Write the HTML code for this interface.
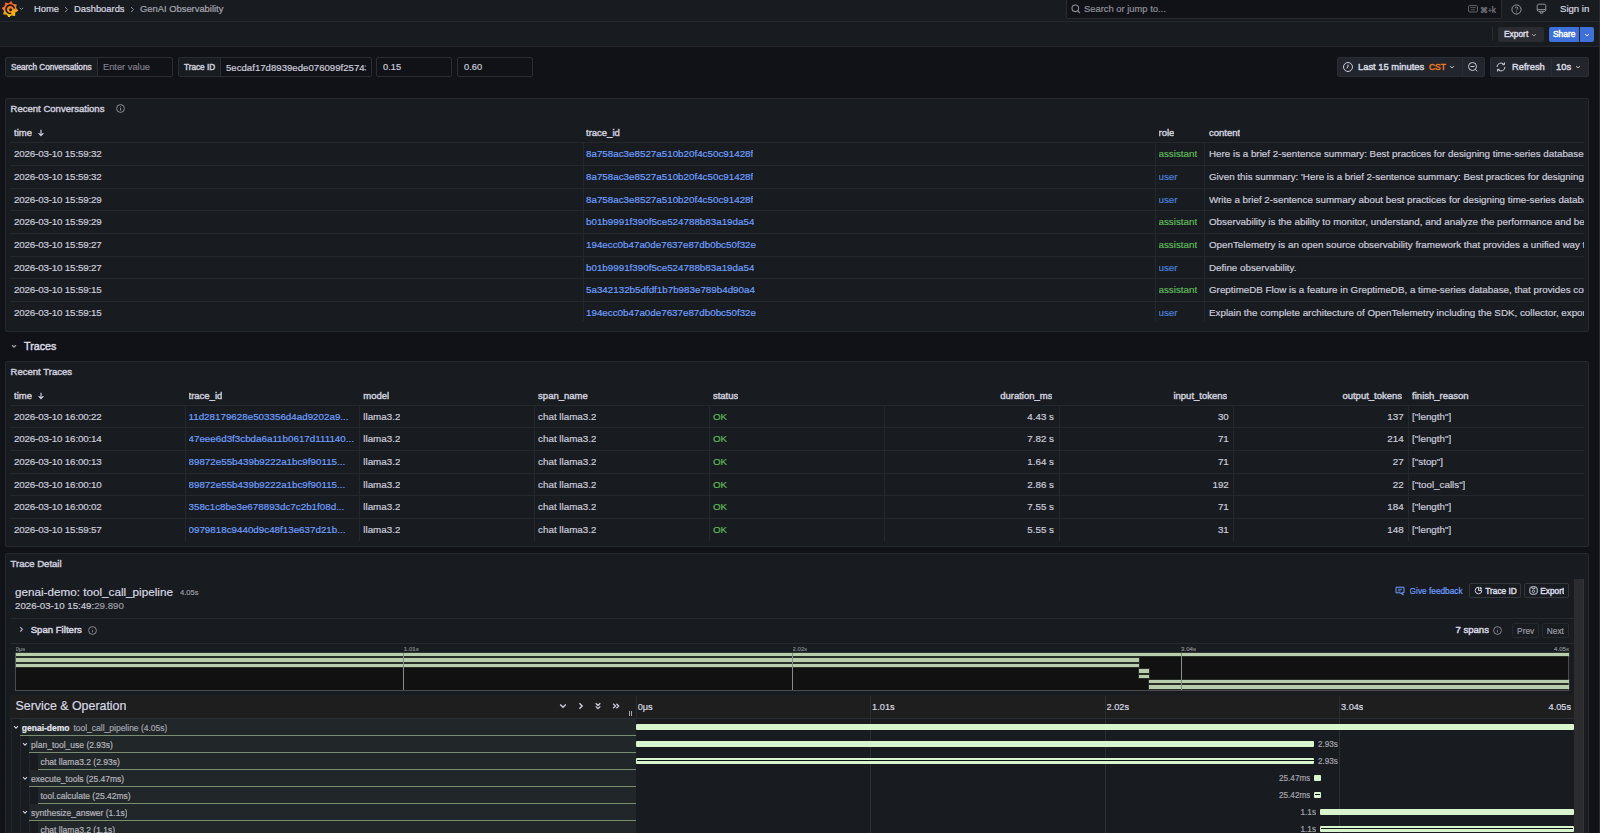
<!DOCTYPE html>
<html><head><meta charset="utf-8">
<style>
*{box-sizing:border-box;margin:0;padding:0}
html,body{width:1600px;height:833px;overflow:hidden;background:#111217;font-family:"Liberation Sans",sans-serif;color:#ccccdc;font-size:9.8px}
.cell,.t,.ptitle{-webkit-text-stroke:0.2px currentColor}
.med{font-weight:normal!important;-webkit-text-stroke:0.45px currentColor!important}
.a{position:absolute}
.t{position:absolute;white-space:nowrap;line-height:12px}
#top{left:0;top:0;width:1600px;height:22px;background:#181b1f;border-bottom:1px solid #25272c}
#tool{left:0;top:22px;width:1600px;height:25px;background:#181b1f;border-bottom:1px solid #25272c}
.panel{position:absolute;left:5px;width:1584px;background:#181b1f;border:1px solid #25282d;border-radius:2px;overflow:hidden}
.ptitle{position:absolute;left:5px;font-weight:normal;-webkit-text-stroke:0.45px currentColor!important;font-size:9.55px;color:#ccccdc;white-space:nowrap}
.tbl{position:absolute;left:5px;width:1573px}
.hr{position:absolute;left:0;width:1573px;height:1px;background:#24272c}
.vr{position:absolute;width:1px;background:#24272c}
.cell{position:absolute;white-space:nowrap;overflow:hidden;line-height:12px}
.hd{font-weight:normal;font-size:9.5px;-webkit-text-stroke:0.45px currentColor!important}
.lnk{color:#6e9fff}
.grn{color:#5fb85a}
.blu{color:#4a80de}
.r{text-align:right}
.var{position:absolute;top:57px;height:20px;border:1px solid #2a2d33;border-radius:2px;background:#111217}
.vlab{position:absolute;top:0;left:0;height:18px;background:#181b1f;border-right:1px solid #2a2d33;font-weight:normal;-webkit-text-stroke:0.45px currentColor;font-size:8.2px;line-height:19.4px;padding-left:5px;white-space:nowrap}
.vval{position:absolute;top:0;height:18px;line-height:19px;font-size:9.3px;-webkit-text-stroke:0.2px currentColor;white-space:nowrap;overflow:hidden}
</style></head><body>
<!-- TOP BAR -->
<div id="top" class="a">
  <svg class="a" style="left:1.5px;top:1px" width="16" height="16" viewBox="0 0 16 16">
    <defs><linearGradient id="lg" x1="0" y1="0" x2="0.2" y2="1"><stop offset="0" stop-color="#f4502a"/><stop offset="0.45" stop-color="#f57a22"/><stop offset="1" stop-color="#fcc512"/></linearGradient></defs>
    <path fill="url(#lg)" stroke="url(#lg)" stroke-width="1.1" stroke-linejoin="round" d="M9.15 0.69 L10.35 2.89 L11.69 3.70 L14.20 3.73 L13.49 6.13 L13.86 7.66 L15.61 9.45 L13.41 10.65 L12.60 11.99 L12.57 14.50 L10.17 13.79 L8.64 14.16 L6.85 15.91 L5.65 13.71 L4.31 12.90 L1.80 12.87 L2.51 10.47 L2.14 8.94 L0.39 7.15 L2.59 5.95 L3.40 4.61 L3.43 2.10 L5.83 2.81 L7.36 2.44Z"/>
    <path fill="none" stroke="#181b1f" stroke-width="1.7" d="M12.4 7.6 A4.2 4.2 0 1 0 9.2 12.4"/>
        <circle cx="8.6" cy="8.8" r="1.5" fill="#181b1f"/>
  </svg>
  <svg class="a" style="left:18.8px;top:7px" width="5" height="4" viewBox="0 0 5 4"><path d="M0.8 0.8l1.7 1.7 1.7-1.7" fill="none" stroke="#8e8f98" stroke-width="1"/></svg>
  <div class="t" style="left:34px;top:3px;font-size:9.4px;color:#d8d9e2">Home</div>
  <svg class="a" style="left:64px;top:6px" width="5" height="7" viewBox="0 0 5 7"><path d="M1 1l2.5 2.5L1 6" fill="none" stroke="#8e8f98" stroke-width="1"/></svg>
  <div class="t" style="left:74px;top:3px;font-size:9.4px;color:#d8d9e2">Dashboards</div>
  <svg class="a" style="left:130px;top:6px" width="5" height="7" viewBox="0 0 5 7"><path d="M1 1l2.5 2.5L1 6" fill="none" stroke="#8e8f98" stroke-width="1"/></svg>
  <div class="t" style="left:140px;top:3px;font-size:9.4px;color:#a6a7b0">GenAI Observability</div>
  <!-- search -->
  <div class="a" style="left:1066px;top:-3px;width:436px;height:22px;background:#111217;border:1px solid #2a2c31;border-radius:2px"></div>
  <svg class="a" style="left:1071px;top:4px" width="10" height="10" viewBox="0 0 10 10"><circle cx="4.3" cy="4.3" r="3.3" fill="none" stroke="#8e8f98" stroke-width="1.1"/><path d="M6.8 6.8L9 9" stroke="#8e8f98" stroke-width="1.1"/></svg>
  <div class="t" style="left:1084px;top:3px;font-size:9.4px;color:#8e8f98">Search or jump to...</div>
  <svg class="a" style="left:1468px;top:5px" width="10" height="8" viewBox="0 0 10 8"><rect x="0.6" y="0.6" width="8.8" height="6.4" rx="1" fill="none" stroke="#6e6f78" stroke-width="0.9"/><path d="M2.2 2.6h5.6M3 4.8h4" stroke="#6e6f78" stroke-width="0.7"/></svg>
  <div class="t" style="left:1480px;top:3.5px;font-size:8.4px;color:#7e7f88">⌘<span style="font-size:6.5px">+</span>k</div>
  <svg class="a" style="left:1511px;top:4px" width="11" height="11" viewBox="0 0 11 11"><circle cx="5.5" cy="5.5" r="4.6" fill="none" stroke="#9b9ca5" stroke-width="1"/><path d="M4.2 4.3a1.3 1.3 0 1 1 1.8 1.2c-.4.2-.5.5-.5.9" fill="none" stroke="#9b9ca5" stroke-width="0.9"/><circle cx="5.5" cy="8" r="0.5" fill="#9b9ca5"/></svg>
  <svg class="a" style="left:1536px;top:3px" width="11" height="12" viewBox="0 0 11 12"><rect x="1.2" y="1.2" width="8.6" height="7.2" rx="1.6" fill="none" stroke="#9b9ca5" stroke-width="0.9"/><path d="M1.3 6.6h8.4M4.2 8.6v1.6h2.6V8.6" fill="none" stroke="#9b9ca5" stroke-width="0.9"/></svg>
  <div class="t" style="left:1560px;top:3px;font-size:9.6px;color:#d8d9e2">Sign in</div>
</div>
<!-- TOOLBAR -->
<div id="tool" class="a">
  <div class="a" style="left:1492px;top:5px;width:1px;height:14px;background:#2a2c31"></div>
  <div class="a" style="left:1498px;top:5px;width:46px;height:15px;background:#2a2c31;border-radius:2px"></div>
  <div class="t med" style="left:1504px;top:6px;font-size:8.4px;line-height:12px;color:#d8d9e2">Export</div>
  <svg class="a" style="left:1531px;top:11px" width="6" height="4" viewBox="0 0 6 4"><path d="M1 1l2 2 2-2" fill="none" stroke="#aaa" stroke-width="0.9"/></svg>
  <div class="a" style="left:1549px;top:5px;width:30px;height:15px;background:#3d71d9;border-radius:2px 0 0 2px"></div>
  <div class="a" style="left:1580px;top:5px;width:14px;height:15px;background:#3d71d9;border-radius:0 2px 2px 0"></div>
  <div class="t med" style="left:1553px;top:6px;font-size:8.4px;color:#fff">Share</div>
  <svg class="a" style="left:1584px;top:11px" width="6" height="4" viewBox="0 0 6 4"><path d="M1 1l2 2 2-2" fill="none" stroke="#fff" stroke-width="0.9"/></svg>
</div>
<!-- VARIABLES -->
<div class="var" style="left:5px;width:168px"><div class="vlab" style="width:92px">Search Conversations</div><div class="vval" style="left:97px;width:70px;color:#7e7f88">Enter value</div></div>
<div class="var" style="left:178px;width:194px"><div class="vlab" style="width:42px">Trace ID</div><div class="vval" style="left:47px;width:140px;font-size:9.65px;color:#ccccdc">5ecdaf17d8939ede076099f25743</div></div>
<div class="var" style="left:376px;width:76px"><div class="vval" style="left:6px;width:60px;color:#ccccdc">0.15</div></div>
<div class="var" style="left:457px;width:76px"><div class="vval" style="left:6px;width:60px;color:#ccccdc">0.60</div></div>
<!-- time picker -->
<div class="a" style="left:1337px;top:57px;width:148px;height:20px;background:#22252b;border:1px solid #2a2d33;border-radius:2px"></div>
<div class="a" style="left:1462px;top:58px;width:1px;height:18px;background:#2a2d33"></div>
<svg class="a" style="left:1342px;top:61px" width="12" height="12" viewBox="0 0 12 12"><circle cx="6" cy="6" r="4.5" fill="none" stroke="#ccccdc" stroke-width="1"/><path d="M6 3.5V6l-1.5 1.3" fill="none" stroke="#ccccdc" stroke-width="1"/></svg>
<div class="t med" style="left:1358px;top:61px;font-size:9.4px;color:#d8d9e2">Last 15 minutes</div>
<div class="t med" style="left:1429px;top:61px;font-size:8.4px;color:#f07b22">CST</div>
<svg class="a" style="left:1449px;top:65px" width="6" height="4" viewBox="0 0 6 4"><path d="M1 1l2 2 2-2" fill="none" stroke="#ccc" stroke-width="0.9"/></svg>
<svg class="a" style="left:1467px;top:61px" width="12" height="12" viewBox="0 0 12 12"><circle cx="5.5" cy="5.5" r="4" fill="none" stroke="#ccccdc" stroke-width="1"/><path d="M3.5 5.5h4M8.3 8.3l2 2" fill="none" stroke="#ccccdc" stroke-width="1"/></svg>
<div class="a" style="left:1490px;top:57px;width:99px;height:20px;background:#22252b;border:1px solid #2a2d33;border-radius:2px"></div>
<div class="a" style="left:1551px;top:58px;width:1px;height:18px;background:#2a2d33"></div>
<svg class="a" style="left:1495px;top:61px" width="12" height="12" viewBox="0 0 12 12"><path d="M10 6a4 4 0 0 1-7 2.6M2 6a4 4 0 0 1 7-2.6" fill="none" stroke="#ccccdc" stroke-width="1"/><path d="M9.5 1.5v2.2H7.3M2.5 10.5V8.3h2.2" fill="none" stroke="#ccccdc" stroke-width="1"/></svg>
<div class="t med" style="left:1512px;top:61px;font-size:9.4px;color:#d8d9e2">Refresh</div>
<div class="t med" style="left:1556px;top:61px;font-size:9.4px;color:#d8d9e2">10s</div>
<svg class="a" style="left:1575px;top:65px" width="6" height="4" viewBox="0 0 6 4"><path d="M1 1l2 2 2-2" fill="none" stroke="#ccc" stroke-width="0.9"/></svg>

<!-- PANEL 1 -->
<div class="panel" style="top:98px;height:234px">
<div class="ptitle" style="left:4.5px;top:3.5px;line-height:12px">Recent Conversations</div>
<svg class="a" style="left:109.5px;top:5px" width="9" height="9" viewBox="0 0 9 9"><circle cx="4.5" cy="4.5" r="3.9" fill="none" stroke="#9a9ba4" stroke-width="0.9"/><path d="M4.5 4v2.6" stroke="#9a9ba4" stroke-width="0.9"/><circle cx="4.5" cy="2.7" r="0.5" fill="#9a9ba4"/></svg>
<div class="cell hd" style="left:8px;top:28.10px;">time</div>
<div class="cell hd" style="left:580px;top:28.10px;">trace_id</div>
<div class="cell hd" style="left:1152.5px;top:28.10px;">role</div>
<div class="cell hd" style="left:1203px;top:28.10px;">content</div>
<svg class="a" style="left:31px;top:29.5px" width="8" height="8" viewBox="0 0 8 8"><path d="M4 0.8v5.6M1.6 4.2L4 6.6l2.4-2.4" fill="none" stroke="#ccccdc" stroke-width="1.2"/></svg>
<div class="hr" style="left:4px;top:43px;width:1574px"></div>
<div class="cell " style="left:8px;top:49.30px;letter-spacing:-0.18px">2026-03-10 15:59:32</div>
<div class="cell lnk" style="left:580px;top:49.30px;">8a758ac3e8527a510b20f4c50c91428f</div>
<div class="cell grn" style="left:1152.5px;top:49.30px;">assistant</div>
<div class="cell " style="left:1203px;top:49.30px;width:374.5px">Here is a brief 2-sentence summary: Best practices for designing time-series database systems include</div>
<div class="hr" style="left:4px;top:66.00px;width:1574px"></div>
<div class="cell " style="left:8px;top:71.97px;letter-spacing:-0.18px">2026-03-10 15:59:32</div>
<div class="cell lnk" style="left:580px;top:71.97px;">8a758ac3e8527a510b20f4c50c91428f</div>
<div class="cell blu" style="left:1152.5px;top:71.97px;">user</div>
<div class="cell " style="left:1203px;top:71.97px;width:374.5px">Given this summary: 'Here is a brief 2-sentence summary: Best practices for designing time-series</div>
<div class="hr" style="left:4px;top:88.67px;width:1574px"></div>
<div class="cell " style="left:8px;top:94.64px;letter-spacing:-0.18px">2026-03-10 15:59:29</div>
<div class="cell lnk" style="left:580px;top:94.64px;">8a758ac3e8527a510b20f4c50c91428f</div>
<div class="cell blu" style="left:1152.5px;top:94.64px;">user</div>
<div class="cell " style="left:1203px;top:94.64px;width:374.5px">Write a brief 2-sentence summary about best practices for designing time-series databases</div>
<div class="hr" style="left:4px;top:111.34px;width:1574px"></div>
<div class="cell " style="left:8px;top:117.31px;letter-spacing:-0.18px">2026-03-10 15:59:29</div>
<div class="cell lnk" style="left:580px;top:117.31px;">b01b9991f390f5ce524788b83a19da54</div>
<div class="cell grn" style="left:1152.5px;top:117.31px;">assistant</div>
<div class="cell " style="left:1203px;top:117.31px;width:374.5px">Observability is the ability to monitor, understand, and analyze the performance and behavior</div>
<div class="hr" style="left:4px;top:134.01px;width:1574px"></div>
<div class="cell " style="left:8px;top:139.98px;letter-spacing:-0.18px">2026-03-10 15:59:27</div>
<div class="cell lnk" style="left:580px;top:139.98px;">194ecc0b47a0de7637e87db0bc50f32e</div>
<div class="cell grn" style="left:1152.5px;top:139.98px;">assistant</div>
<div class="cell " style="left:1203px;top:139.98px;width:374.5px">OpenTelemetry is an open source observability framework that provides a unified way to collect</div>
<div class="hr" style="left:4px;top:156.68px;width:1574px"></div>
<div class="cell " style="left:8px;top:162.65px;letter-spacing:-0.18px">2026-03-10 15:59:27</div>
<div class="cell lnk" style="left:580px;top:162.65px;">b01b9991f390f5ce524788b83a19da54</div>
<div class="cell blu" style="left:1152.5px;top:162.65px;">user</div>
<div class="cell " style="left:1203px;top:162.65px;width:374.5px">Define observability.</div>
<div class="hr" style="left:4px;top:179.35px;width:1574px"></div>
<div class="cell " style="left:8px;top:185.32px;letter-spacing:-0.18px">2026-03-10 15:59:15</div>
<div class="cell lnk" style="left:580px;top:185.32px;">5a342132b5dfdf1b7b983e789b4d90a4</div>
<div class="cell grn" style="left:1152.5px;top:185.32px;">assistant</div>
<div class="cell " style="left:1203px;top:185.32px;width:374.5px">GreptimeDB Flow is a feature in GreptimeDB, a time-series database, that provides continuous</div>
<div class="hr" style="left:4px;top:202.02px;width:1574px"></div>
<div class="cell " style="left:8px;top:207.99px;letter-spacing:-0.18px">2026-03-10 15:59:15</div>
<div class="cell lnk" style="left:580px;top:207.99px;">194ecc0b47a0de7637e87db0bc50f32e</div>
<div class="cell blu" style="left:1152.5px;top:207.99px;">user</div>
<div class="cell " style="left:1203px;top:207.99px;width:374.5px">Explain the complete architecture of OpenTelemetry including the SDK, collector, exporters</div>
<div class="vr" style="left:576.5px;top:43px;height:179px"></div>
<div class="vr" style="left:1148.5px;top:43px;height:179px"></div>
<div class="vr" style="left:1198px;top:43px;height:179px"></div>
</div>
<!-- ROW TRACES -->
<svg class="a" style="left:10.5px;top:344px" width="6" height="5" viewBox="0 0 6 5"><path d="M1 1.2l2 2 2-2" fill="none" stroke="#a8a9b2" stroke-width="1.2"/></svg>
<div class="t med" style="left:24px;top:340.3px;font-size:10.7px;color:#d8d9e2">Traces</div>
<!-- PANEL 2 -->
<div class="panel" style="top:361px;height:186px">
<div class="ptitle" style="left:4.5px;top:3.6999999999999886px;line-height:12px">Recent Traces</div>
<div class="cell hd" style="left:8px;top:28.30px;">time</div>
<div class="cell hd" style="left:182.5px;top:28.30px;">trace_id</div>
<div class="cell hd" style="left:357.3px;top:28.30px;">model</div>
<div class="cell hd" style="left:532.1px;top:28.30px;">span_name</div>
<div class="cell hd" style="left:706.9px;top:28.30px;">status</div>
<div class="cell hd r" style="left:877.7px;top:28.30px;width:168.8px">duration_ms</div>
<div class="cell hd r" style="left:1052.5px;top:28.30px;width:168.8px">input_tokens</div>
<div class="cell hd r" style="left:1227.3px;top:28.30px;width:168.8px">output_tokens</div>
<div class="cell hd" style="left:1406.1px;top:28.30px;">finish_reason</div>
<svg class="a" style="left:31px;top:29.69999999999999px" width="8" height="8" viewBox="0 0 8 8"><path d="M4 0.8v5.6M1.6 4.2L4 6.6l2.4-2.4" fill="none" stroke="#ccccdc" stroke-width="1.2"/></svg>
<div class="hr" style="left:4px;top:42.5px;width:1574px"></div>
<div class="cell " style="left:8px;top:48.60px;letter-spacing:-0.18px">2026-03-10 16:00:22</div>
<div class="cell lnk" style="left:182.5px;top:48.60px;">11d28179628e503356d4ad9202a9...</div>
<div class="cell " style="left:357.3px;top:48.60px;">llama3.2</div>
<div class="cell " style="left:532.1px;top:48.60px;">chat llama3.2</div>
<div class="cell grn" style="left:706.9px;top:48.60px;">OK</div>
<div class="cell r " style="left:877.7px;top:48.60px;width:170.3px">4.43 s</div>
<div class="cell r " style="left:1052.5px;top:48.60px;width:170.3px">30</div>
<div class="cell r " style="left:1227.3px;top:48.60px;width:170.3px">137</div>
<div class="cell " style="left:1406.1px;top:48.60px;">["length"]</div>
<div class="hr" style="left:4px;top:65.30px;width:1574px"></div>
<div class="cell " style="left:8px;top:71.27px;letter-spacing:-0.18px">2026-03-10 16:00:14</div>
<div class="cell lnk" style="left:182.5px;top:71.27px;">47eee6d3f3cbda6a11b0617d111140...</div>
<div class="cell " style="left:357.3px;top:71.27px;">llama3.2</div>
<div class="cell " style="left:532.1px;top:71.27px;">chat llama3.2</div>
<div class="cell grn" style="left:706.9px;top:71.27px;">OK</div>
<div class="cell r " style="left:877.7px;top:71.27px;width:170.3px">7.82 s</div>
<div class="cell r " style="left:1052.5px;top:71.27px;width:170.3px">71</div>
<div class="cell r " style="left:1227.3px;top:71.27px;width:170.3px">214</div>
<div class="cell " style="left:1406.1px;top:71.27px;">["length"]</div>
<div class="hr" style="left:4px;top:87.97px;width:1574px"></div>
<div class="cell " style="left:8px;top:93.94px;letter-spacing:-0.18px">2026-03-10 16:00:13</div>
<div class="cell lnk" style="left:182.5px;top:93.94px;">89872e55b439b9222a1bc9f90115...</div>
<div class="cell " style="left:357.3px;top:93.94px;">llama3.2</div>
<div class="cell " style="left:532.1px;top:93.94px;">chat llama3.2</div>
<div class="cell grn" style="left:706.9px;top:93.94px;">OK</div>
<div class="cell r " style="left:877.7px;top:93.94px;width:170.3px">1.64 s</div>
<div class="cell r " style="left:1052.5px;top:93.94px;width:170.3px">71</div>
<div class="cell r " style="left:1227.3px;top:93.94px;width:170.3px">27</div>
<div class="cell " style="left:1406.1px;top:93.94px;">["stop"]</div>
<div class="hr" style="left:4px;top:110.64px;width:1574px"></div>
<div class="cell " style="left:8px;top:116.61px;letter-spacing:-0.18px">2026-03-10 16:00:10</div>
<div class="cell lnk" style="left:182.5px;top:116.61px;">89872e55b439b9222a1bc9f90115...</div>
<div class="cell " style="left:357.3px;top:116.61px;">llama3.2</div>
<div class="cell " style="left:532.1px;top:116.61px;">chat llama3.2</div>
<div class="cell grn" style="left:706.9px;top:116.61px;">OK</div>
<div class="cell r " style="left:877.7px;top:116.61px;width:170.3px">2.86 s</div>
<div class="cell r " style="left:1052.5px;top:116.61px;width:170.3px">192</div>
<div class="cell r " style="left:1227.3px;top:116.61px;width:170.3px">22</div>
<div class="cell " style="left:1406.1px;top:116.61px;">["tool_calls"]</div>
<div class="hr" style="left:4px;top:133.31px;width:1574px"></div>
<div class="cell " style="left:8px;top:139.28px;letter-spacing:-0.18px">2026-03-10 16:00:02</div>
<div class="cell lnk" style="left:182.5px;top:139.28px;">358c1c8be3e678893dc7c2b1f08d...</div>
<div class="cell " style="left:357.3px;top:139.28px;">llama3.2</div>
<div class="cell " style="left:532.1px;top:139.28px;">chat llama3.2</div>
<div class="cell grn" style="left:706.9px;top:139.28px;">OK</div>
<div class="cell r " style="left:877.7px;top:139.28px;width:170.3px">7.55 s</div>
<div class="cell r " style="left:1052.5px;top:139.28px;width:170.3px">71</div>
<div class="cell r " style="left:1227.3px;top:139.28px;width:170.3px">184</div>
<div class="cell " style="left:1406.1px;top:139.28px;">["length"]</div>
<div class="hr" style="left:4px;top:155.98px;width:1574px"></div>
<div class="cell " style="left:8px;top:161.95px;letter-spacing:-0.18px">2026-03-10 15:59:57</div>
<div class="cell lnk" style="left:182.5px;top:161.95px;">0979818c9440d9c48f13e637d21b...</div>
<div class="cell " style="left:357.3px;top:161.95px;">llama3.2</div>
<div class="cell " style="left:532.1px;top:161.95px;">chat llama3.2</div>
<div class="cell grn" style="left:706.9px;top:161.95px;">OK</div>
<div class="cell r " style="left:877.7px;top:161.95px;width:170.3px">5.55 s</div>
<div class="cell r " style="left:1052.5px;top:161.95px;width:170.3px">31</div>
<div class="cell r " style="left:1227.3px;top:161.95px;width:170.3px">148</div>
<div class="cell " style="left:1406.1px;top:161.95px;">["length"]</div>
<div class="vr" style="left:178.5px;top:42.5px;height:136px"></div>
<div class="vr" style="left:353.3px;top:42.5px;height:136px"></div>
<div class="vr" style="left:528.1px;top:42.5px;height:136px"></div>
<div class="vr" style="left:702.9px;top:42.5px;height:136px"></div>
<div class="vr" style="left:877.7px;top:42.5px;height:136px"></div>
<div class="vr" style="left:1052.5px;top:42.5px;height:136px"></div>
<div class="vr" style="left:1227.3px;top:42.5px;height:136px"></div>
<div class="vr" style="left:1402.1px;top:42.5px;height:136px"></div>
</div>
<!-- PANEL 3 -->
<div class="panel" style="top:553px;height:290px">
<div class="ptitle" style="left:4.5px;top:4.40px;line-height:12px">Trace Detail</div>
<div class="cell" style="left:9px;top:30.90px;line-height:14px;font-size:11.7px;color:#d8d9e2">genai-demo: tool_call_pipeline</div>
<div class="cell" style="left:174px;top:34.00px;line-height:10px;font-size:7.6px;color:#9a9ba4">4.05s</div>
<div class="cell" style="left:9px;top:46.30px;font-size:9.7px;color:#ccccdc">2026-03-10 15:49:<span style="color:#9a9ba4">29.890</span></div>
<svg class="a" style="left:1389px;top:31.5px" width="10" height="10" viewBox="0 0 10 10"><path d="M1 1.2h8v5.6H6.4l2 2.2-3.4-2.2H1z" fill="none" stroke="#6e9fff" stroke-width="1"/><path d="M2.8 3.2h4.4M2.8 4.9h3" stroke="#6e9fff" stroke-width="0.8"/></svg>
<div class="cell" style="left:1403.6px;top:30.60px;font-size:8.3px;color:#6e9fff">Give feedback</div>
<div class="a" style="left:1462.5px;top:28.80px;width:52.5px;height:15.6px;border:1px solid #34363c;border-radius:2px"></div>
<svg class="a" style="left:1467.5px;top:32.00px" width="9" height="9" viewBox="0 0 9 9"><path d="M4.5 1.2a3.3 3.3 0 1 0 3.3 3.3H4.5z" fill="none" stroke="#ccccdc" stroke-width="1"/><path d="M5.6 0.8a2.8 2.8 0 0 1 2.6 2.6H5.6z" fill="#ccccdc"/></svg>
<div class="cell med" style="left:1479.3px;top:30.60px;font-size:8.3px;color:#d8d9e2">Trace ID</div>
<div class="a" style="left:1517.5px;top:28.80px;width:45.5px;height:15.6px;border:1px solid #34363c;border-radius:2px"></div>
<svg class="a" style="left:1522.5px;top:32.00px" width="9" height="9" viewBox="0 0 9 9"><rect x="0.8" y="0.8" width="7.4" height="7.4" rx="2.2" fill="none" stroke="#ccccdc" stroke-width="1"/><circle cx="4.5" cy="5.3" r="1.2" fill="none" stroke="#ccccdc" stroke-width="0.9"/><path d="M3 1v1.6h3V1" fill="none" stroke="#ccccdc" stroke-width="0.8"/></svg>
<div class="cell med" style="left:1534.3px;top:30.60px;font-size:8.3px;color:#d8d9e2">Export</div>
<div class="hr" style="left:4.5px;top:63.50px;width:1563px;background:#262a2f"></div>
<div class="hr" style="left:4.5px;top:88.50px;width:1563px;background:#262a2f"></div>
<svg class="a" style="left:12.5px;top:72.00px" width="5" height="7" viewBox="0 0 5 7"><path d="M1.2 1.2l2.2 2.2L1.2 5.6" fill="none" stroke="#b8b9c2" stroke-width="1.1"/></svg>
<div class="cell med" style="left:24.7px;top:70.00px;font-size:9.6px;color:#d8d9e2">Span Filters</div>
<svg class="a" style="left:82.3px;top:71.50px" width="9" height="9" viewBox="0 0 9 9"><circle cx="4.5" cy="4.5" r="3.9" fill="none" stroke="#a0a1aa" stroke-width="0.8"/><path d="M4.5 4v2.4" stroke="#a0a1aa" stroke-width="0.7"/><circle cx="4.5" cy="2.8" r="0.4" fill="#a0a1aa"/></svg>
<div class="cell med" style="left:1449.4px;top:70.00px;font-size:9.6px;color:#d8d9e2">7 spans</div>
<svg class="a" style="left:1486.5px;top:72.00px" width="9" height="9" viewBox="0 0 9 9"><circle cx="4.5" cy="4.5" r="3.9" fill="none" stroke="#a0a1aa" stroke-width="0.8"/><path d="M4.5 4v2.4" stroke="#a0a1aa" stroke-width="0.7"/><circle cx="4.5" cy="2.8" r="0.4" fill="#a0a1aa"/></svg>
<div class="a" style="left:1506.3px;top:69.00px;width:26.7px;height:15px;border:1px solid #25282d;border-radius:2px"></div>
<div class="cell" style="left:1506.3px;top:70.50px;width:26.7px;text-align:center;font-size:8.3px;color:#9a9ba4">Prev</div>
<div class="a" style="left:1536px;top:69.00px;width:26.8px;height:15px;border:1px solid #25282d;border-radius:2px"></div>
<div class="cell" style="left:1536px;top:70.50px;width:26.8px;text-align:center;font-size:8.3px;color:#9a9ba4">Next</div>
<div class="a" style="left:9px;top:98.75px;width:1554px;height:38px;background:#111111;border:1px solid #4a4b4e;border-top:none"></div>
<div class="a" style="left:10.00px;top:99.10px;width:1553.00px;height:3.4px;background:#b7cdac;box-shadow:0 0 0 0.9px rgba(150,170,140,0.22)"></div>
<div class="a" style="left:10.00px;top:104.46px;width:1123.25px;height:3.4px;background:#b7cdac;box-shadow:0 0 0 0.9px rgba(150,170,140,0.22)"></div>
<div class="a" style="left:10.00px;top:109.82px;width:1123.25px;height:3.4px;background:#b7cdac;box-shadow:0 0 0 0.9px rgba(150,170,140,0.22)"></div>
<div class="a" style="left:1133.25px;top:115.18px;width:10.00px;height:3.4px;background:#b7cdac;box-shadow:0 0 0 0.9px rgba(150,170,140,0.22)"></div>
<div class="a" style="left:1133.25px;top:120.54px;width:10.00px;height:3.4px;background:#b7cdac;box-shadow:0 0 0 0.9px rgba(150,170,140,0.22)"></div>
<div class="a" style="left:1142.75px;top:125.90px;width:420.25px;height:3.4px;background:#b7cdac;box-shadow:0 0 0 0.9px rgba(150,170,140,0.22)"></div>
<div class="a" style="left:1142.75px;top:131.26px;width:420.25px;height:3.4px;background:#b7cdac;box-shadow:0 0 0 0.9px rgba(150,170,140,0.22)"></div>
<div class="cell" style="left:9.50px;top:90.70px;line-height:8px;font-size:6.1px;color:#85868c">0μs</div>
<div class="a" style="left:397.30px;top:98.75px;width:1px;height:37px;background:#8a8b8e"></div>
<div class="cell" style="left:397.80px;top:90.70px;line-height:8px;font-size:6.1px;color:#85868c">1.01s</div>
<div class="a" style="left:786.00px;top:98.75px;width:1px;height:37px;background:#8a8b8e"></div>
<div class="cell" style="left:786.50px;top:90.70px;line-height:8px;font-size:6.1px;color:#85868c">2.02s</div>
<div class="a" style="left:1174.60px;top:98.75px;width:1px;height:37px;background:#8a8b8e"></div>
<div class="cell" style="left:1175.10px;top:90.70px;line-height:8px;font-size:6.1px;color:#85868c">3.04s</div>
<div class="cell r" style="left:1523.00px;width:40px;top:90.70px;line-height:8px;font-size:6.1px;color:#85868c">4.05s</div>
<div class="a" style="left:4px;top:140.60px;width:1563.7px;height:24.00px;background:#1e1e1f;border-bottom:1px solid #2c2d30"></div>
<div class="cell" style="left:9.5px;top:145.00px;line-height:14px;font-size:12.4px;color:#d8d9e2">Service &amp; Operation</div>
<svg class="a" style="left:553px;top:148.50px" width="8" height="6" viewBox="0 0 8 6"><path d="M1.2 1.4L4 4.2l2.8-2.8" fill="none" stroke="#ccccdc" stroke-width="1.4"/></svg>
<svg class="a" style="left:571.5px;top:148.00px" width="6" height="8" viewBox="0 0 6 8"><path d="M1.4 1.2L4.2 4l-2.8 2.8" fill="none" stroke="#ccccdc" stroke-width="1.4"/></svg>
<svg class="a" style="left:588px;top:147.50px" width="8" height="9" viewBox="0 0 8 9"><path d="M1.7 1.2L4 3.5l2.3-2.3M1.7 4.4L4 6.7l2.3-2.3" fill="none" stroke="#ccccdc" stroke-width="1.3"/></svg>
<svg class="a" style="left:605.5px;top:148.00px" width="9" height="8" viewBox="0 0 9 8"><path d="M1.2 1.7L3.5 4l-2.3 2.3M4.4 1.7L6.7 4l-2.3 2.3" fill="none" stroke="#ccccdc" stroke-width="1.3"/></svg>
<div class="a" style="left:623.3px;top:156.60px;width:0.9px;height:5.6px;background:#a6a7b0"></div>
<div class="a" style="left:625.3px;top:156.60px;width:0.9px;height:5.6px;background:#a6a7b0"></div>
<div class="a" style="left:629.50px;top:141.60px;width:1px;height:23.00px;background:#2a2b2e"></div>
<div class="cell" style="left:631.70px;top:147.00px;font-size:9.2px;color:#d8d9e2">0μs</div>
<div class="a" style="left:864.12px;top:141.60px;width:1px;height:24.00px;background:#2a2d31"></div>
<div class="cell" style="left:866.12px;top:147.00px;font-size:9.2px;color:#d8d9e2">1.01s</div>
<div class="a" style="left:1098.55px;top:141.60px;width:1px;height:24.00px;background:#2a2d31"></div>
<div class="cell" style="left:1100.55px;top:147.00px;font-size:9.2px;color:#d8d9e2">2.02s</div>
<div class="a" style="left:1332.98px;top:141.60px;width:1px;height:24.00px;background:#2a2d31"></div>
<div class="cell" style="left:1334.98px;top:147.00px;font-size:9.2px;color:#d8d9e2">3.04s</div>
<div class="cell r" style="left:1515.00px;width:50px;top:147.00px;font-size:9.2px;color:#d8d9e2">4.05s</div>
<div class="a" style="left:630.00px;top:164.50px;width:937.70px;height:121.5px;background:#181b1f"></div>
<div class="a" style="left:864.12px;top:164.50px;width:1px;height:121.50px;background:#2a2d31"></div>
<div class="a" style="left:1098.55px;top:164.50px;width:1px;height:121.50px;background:#2a2d31"></div>
<div class="a" style="left:1332.98px;top:164.50px;width:1px;height:121.50px;background:#2a2d31"></div>
<div class="a" style="left:4.50px;top:164.50px;width:9.3px;height:17px;background:#181b1f;border-left:1px solid #23262a"></div>
<div class="a" style="left:13.80px;top:164.50px;width:616.20px;height:17px;background:#212628"></div>
<div class="a" style="left:13.80px;top:181.00px;width:616.20px;height:1.2px;background:#7b8d71"></div>
<svg class="a" style="left:6.70px;top:170.50px" width="6" height="5" viewBox="0 0 6 5"><path d="M1 1.2l2 2 2-2" fill="none" stroke="#ccccdc" stroke-width="1.1"/></svg>
<div class="cell" style="left:15.80px;top:167.50px;font-size:8.5px;color:#b4b5bd"><b style="color:#e4e5ec">genai-demo</b> <span style="color:#a3a4ac;margin-left:1.5px">tool_call_pipeline (4.05s)</span></div>
<div class="a" style="left:630.00px;top:169.60px;width:937.70px;height:6.5px;background:#d8f5cd;border-radius:1px"></div>
<div class="a" style="left:4.50px;top:181.50px;width:9.3px;height:17px;background:#181b1f;border-left:1px solid #23262a"></div>
<div class="a" style="left:13.80px;top:181.50px;width:9.3px;height:17px;background:#181b1f;border-left:1px solid #23262a"></div>
<div class="a" style="left:23.10px;top:181.50px;width:606.90px;height:17px;background:#212628"></div>
<div class="a" style="left:23.10px;top:198.00px;width:606.90px;height:1.2px;background:#7b8d71"></div>
<svg class="a" style="left:16.00px;top:187.50px" width="6" height="5" viewBox="0 0 6 5"><path d="M1 1.2l2 2 2-2" fill="none" stroke="#ccccdc" stroke-width="1.1"/></svg>
<div class="cell" style="left:25.10px;top:184.50px;font-size:8.5px;color:#b4b5bd">plan_tool_use (2.93s)</div>
<div class="a" style="left:630.00px;top:186.60px;width:678.39px;height:6.5px;background:#d8f5cd;border-radius:1px"></div>
<div class="cell" style="left:1311.89px;top:185.10px;font-size:8.2px;color:#a3a4ac">2.93s</div>
<div class="a" style="left:4.50px;top:198.50px;width:9.3px;height:17px;background:#181b1f;border-left:1px solid #23262a"></div>
<div class="a" style="left:13.80px;top:198.50px;width:9.3px;height:17px;background:#181b1f;border-left:1px solid #23262a"></div>
<div class="a" style="left:23.10px;top:198.50px;width:9.3px;height:17px;background:#181b1f;border-left:1px solid #23262a"></div>
<div class="a" style="left:32.40px;top:198.50px;width:597.60px;height:17px;background:#212628"></div>
<div class="a" style="left:32.40px;top:215.00px;width:597.60px;height:1.2px;background:#7b8d71"></div>
<div class="cell" style="left:34.40px;top:201.50px;font-size:8.5px;color:#b4b5bd">chat llama3.2 (2.93s)</div>
<div class="a" style="left:630.00px;top:203.60px;width:678.39px;height:6.5px;background:#d8f5cd;border-radius:1px"></div>
<div class="a" style="left:630.80px;top:206.30px;width:676.79px;height:1.1px;background:#111314"></div>
<div class="cell" style="left:1311.89px;top:202.10px;font-size:8.2px;color:#a3a4ac">2.93s</div>
<div class="a" style="left:4.50px;top:215.50px;width:9.3px;height:17px;background:#181b1f;border-left:1px solid #23262a"></div>
<div class="a" style="left:13.80px;top:215.50px;width:9.3px;height:17px;background:#181b1f;border-left:1px solid #23262a"></div>
<div class="a" style="left:23.10px;top:215.50px;width:606.90px;height:17px;background:#212628"></div>
<div class="a" style="left:23.10px;top:232.00px;width:606.90px;height:1.2px;background:#7b8d71"></div>
<svg class="a" style="left:16.00px;top:221.50px" width="6" height="5" viewBox="0 0 6 5"><path d="M1 1.2l2 2 2-2" fill="none" stroke="#ccccdc" stroke-width="1.1"/></svg>
<div class="cell" style="left:25.10px;top:218.50px;font-size:8.5px;color:#b4b5bd">execute_tools (25.47ms)</div>
<div class="a" style="left:1308.39px;top:220.60px;width:6.20px;height:6.5px;background:#d8f5cd;border-radius:1px"></div>
<div class="cell r" style="left:1244.39px;width:60px;top:219.10px;font-size:8.2px;color:#a3a4ac">25.47ms</div>
<div class="a" style="left:4.50px;top:232.50px;width:9.3px;height:17px;background:#181b1f;border-left:1px solid #23262a"></div>
<div class="a" style="left:13.80px;top:232.50px;width:9.3px;height:17px;background:#181b1f;border-left:1px solid #23262a"></div>
<div class="a" style="left:23.10px;top:232.50px;width:9.3px;height:17px;background:#181b1f;border-left:1px solid #23262a"></div>
<div class="a" style="left:32.40px;top:232.50px;width:597.60px;height:17px;background:#212628"></div>
<div class="a" style="left:32.40px;top:249.00px;width:597.60px;height:1.2px;background:#7b8d71"></div>
<div class="cell" style="left:34.40px;top:235.50px;font-size:8.5px;color:#b4b5bd">tool.calculate (25.42ms)</div>
<div class="a" style="left:1308.39px;top:237.60px;width:6.20px;height:6.5px;background:#d8f5cd;border-radius:1px"></div>
<div class="a" style="left:1309.19px;top:240.30px;width:4.60px;height:1.1px;background:#111314"></div>
<div class="cell r" style="left:1244.39px;width:60px;top:236.10px;font-size:8.2px;color:#a3a4ac">25.42ms</div>
<div class="a" style="left:4.50px;top:249.50px;width:9.3px;height:17px;background:#181b1f;border-left:1px solid #23262a"></div>
<div class="a" style="left:13.80px;top:249.50px;width:9.3px;height:17px;background:#181b1f;border-left:1px solid #23262a"></div>
<div class="a" style="left:23.10px;top:249.50px;width:606.90px;height:17px;background:#212628"></div>
<div class="a" style="left:23.10px;top:266.00px;width:606.90px;height:1.2px;background:#7b8d71"></div>
<svg class="a" style="left:16.00px;top:255.50px" width="6" height="5" viewBox="0 0 6 5"><path d="M1 1.2l2 2 2-2" fill="none" stroke="#ccccdc" stroke-width="1.1"/></svg>
<div class="cell" style="left:25.10px;top:252.50px;font-size:8.5px;color:#b4b5bd">synthesize_answer (1.1s)</div>
<div class="a" style="left:1314.00px;top:254.60px;width:253.70px;height:6.5px;background:#d8f5cd;border-radius:1px"></div>
<div class="cell r" style="left:1250.00px;width:60px;top:253.10px;font-size:8.2px;color:#a3a4ac">1.1s</div>
<div class="a" style="left:4.50px;top:266.50px;width:9.3px;height:17px;background:#181b1f;border-left:1px solid #23262a"></div>
<div class="a" style="left:13.80px;top:266.50px;width:9.3px;height:17px;background:#181b1f;border-left:1px solid #23262a"></div>
<div class="a" style="left:23.10px;top:266.50px;width:9.3px;height:17px;background:#181b1f;border-left:1px solid #23262a"></div>
<div class="a" style="left:32.40px;top:266.50px;width:597.60px;height:17px;background:#212628"></div>
<div class="a" style="left:32.40px;top:283.00px;width:597.60px;height:1.2px;background:#7b8d71"></div>
<div class="cell" style="left:34.40px;top:269.50px;font-size:8.5px;color:#b4b5bd">chat llama3.2 (1.1s)</div>
<div class="a" style="left:1314.00px;top:271.60px;width:253.70px;height:6.5px;background:#d8f5cd;border-radius:1px"></div>
<div class="a" style="left:1314.80px;top:274.30px;width:252.10px;height:1.1px;background:#111314"></div>
<div class="cell r" style="left:1250.00px;width:60px;top:270.10px;font-size:8.2px;color:#a3a4ac">1.1s</div>
<div class="a" style="left:1568.3px;top:24.60px;width:9.3px;height:300px;background:#2c2c2e;border-right:1px solid #353538"></div>
</div>
<div class="a" style="left:1599px;top:0;width:1px;height:833px;background:#2a2b2f"></div>
</body></html>
